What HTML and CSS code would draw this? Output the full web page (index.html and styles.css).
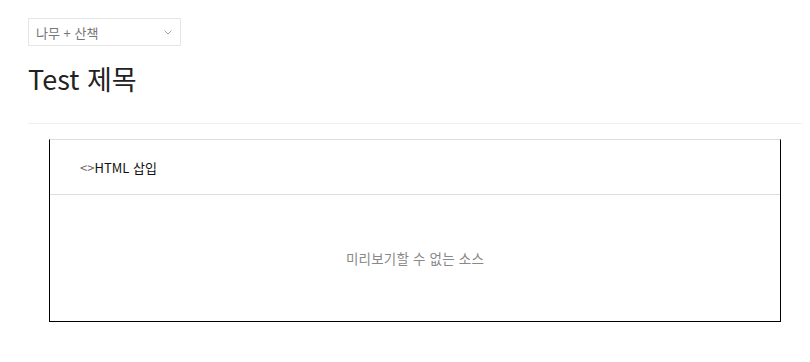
FILE: index.html
```html
<!DOCTYPE html>
<html lang="ko">

<head>
    <meta charset="UTF-8" />
    <meta name="viewport" content="width=device-width, initial-scale=1.0" />
    <title>Test 제목</title>
    <link rel="stylesheet" href="styles.css">
</head>

<body>
    <div class="page">
        <div class="category-select">
            <span>나무 + 산책</span>
            <svg class="chevron" width="8" height="5" viewBox="0 0 8 5">
                <path d="M0.5 0.5 L4 4 L7.5 0.5" fill="none" stroke="#aaa" stroke-width="1" />
            </svg>
        </div>

        <h1 class="post-title">Test 제목</h1>

        <div class="divider"></div>

        <div class="content">
            <div class="html-block">
                <div class="html-block-header">
                    <span class="code-mark">&lt;&gt;</span>HTML 삽입
                </div>
                <div class="html-block-body">미리보기할 수 없는 소스</div>
            </div>
        </div>
    </div>
</body>

</html>
```

FILE: styles.css
```css
body {
    margin: 0;
    font-family: 'Noto Sans CJK KR', 'Noto Sans', sans-serif;
    background: #fff;
    color: #222;
}

.page {
    width: 774px;
    padding: 18px 0 0 28px;
}

.category-select {
    width: 153px;
    height: 28px;
    box-sizing: border-box;
    border: 1px solid #e6e6e6;
    display: flex;
    align-items: center;
    justify-content: space-between;
    padding: 0 8px 0 7px;
    font-size: 13px;
    color: #777;
}

.chevron {
    display: block;
}

.post-title {
    margin: 13px 0 0;
    font-size: 27px;
    font-weight: 400;
    line-height: 40px;
    color: #222;
}

.divider {
    margin-top: 24px;
    height: 1px;
    background: #eeeeee;
}

.content {
    padding: 15px 21px 0;
}

.html-block {
    border: 1px solid #000;
    border-top-color: #dddddd;
}

.html-block-header {
    height: 55px;
    box-sizing: border-box;
    border-bottom: 1px solid #dddddd;
    display: flex;
    align-items: center;
    padding-left: 30px;
    font-size: 13px;
    color: #111;
}

.code-mark {
    color: #666;
}

.html-block-body {
    height: 126px;
    display: flex;
    align-items: center;
    justify-content: center;
    font-size: 13.5px;
    letter-spacing: 0.2px;
    color: #888;
}
```
